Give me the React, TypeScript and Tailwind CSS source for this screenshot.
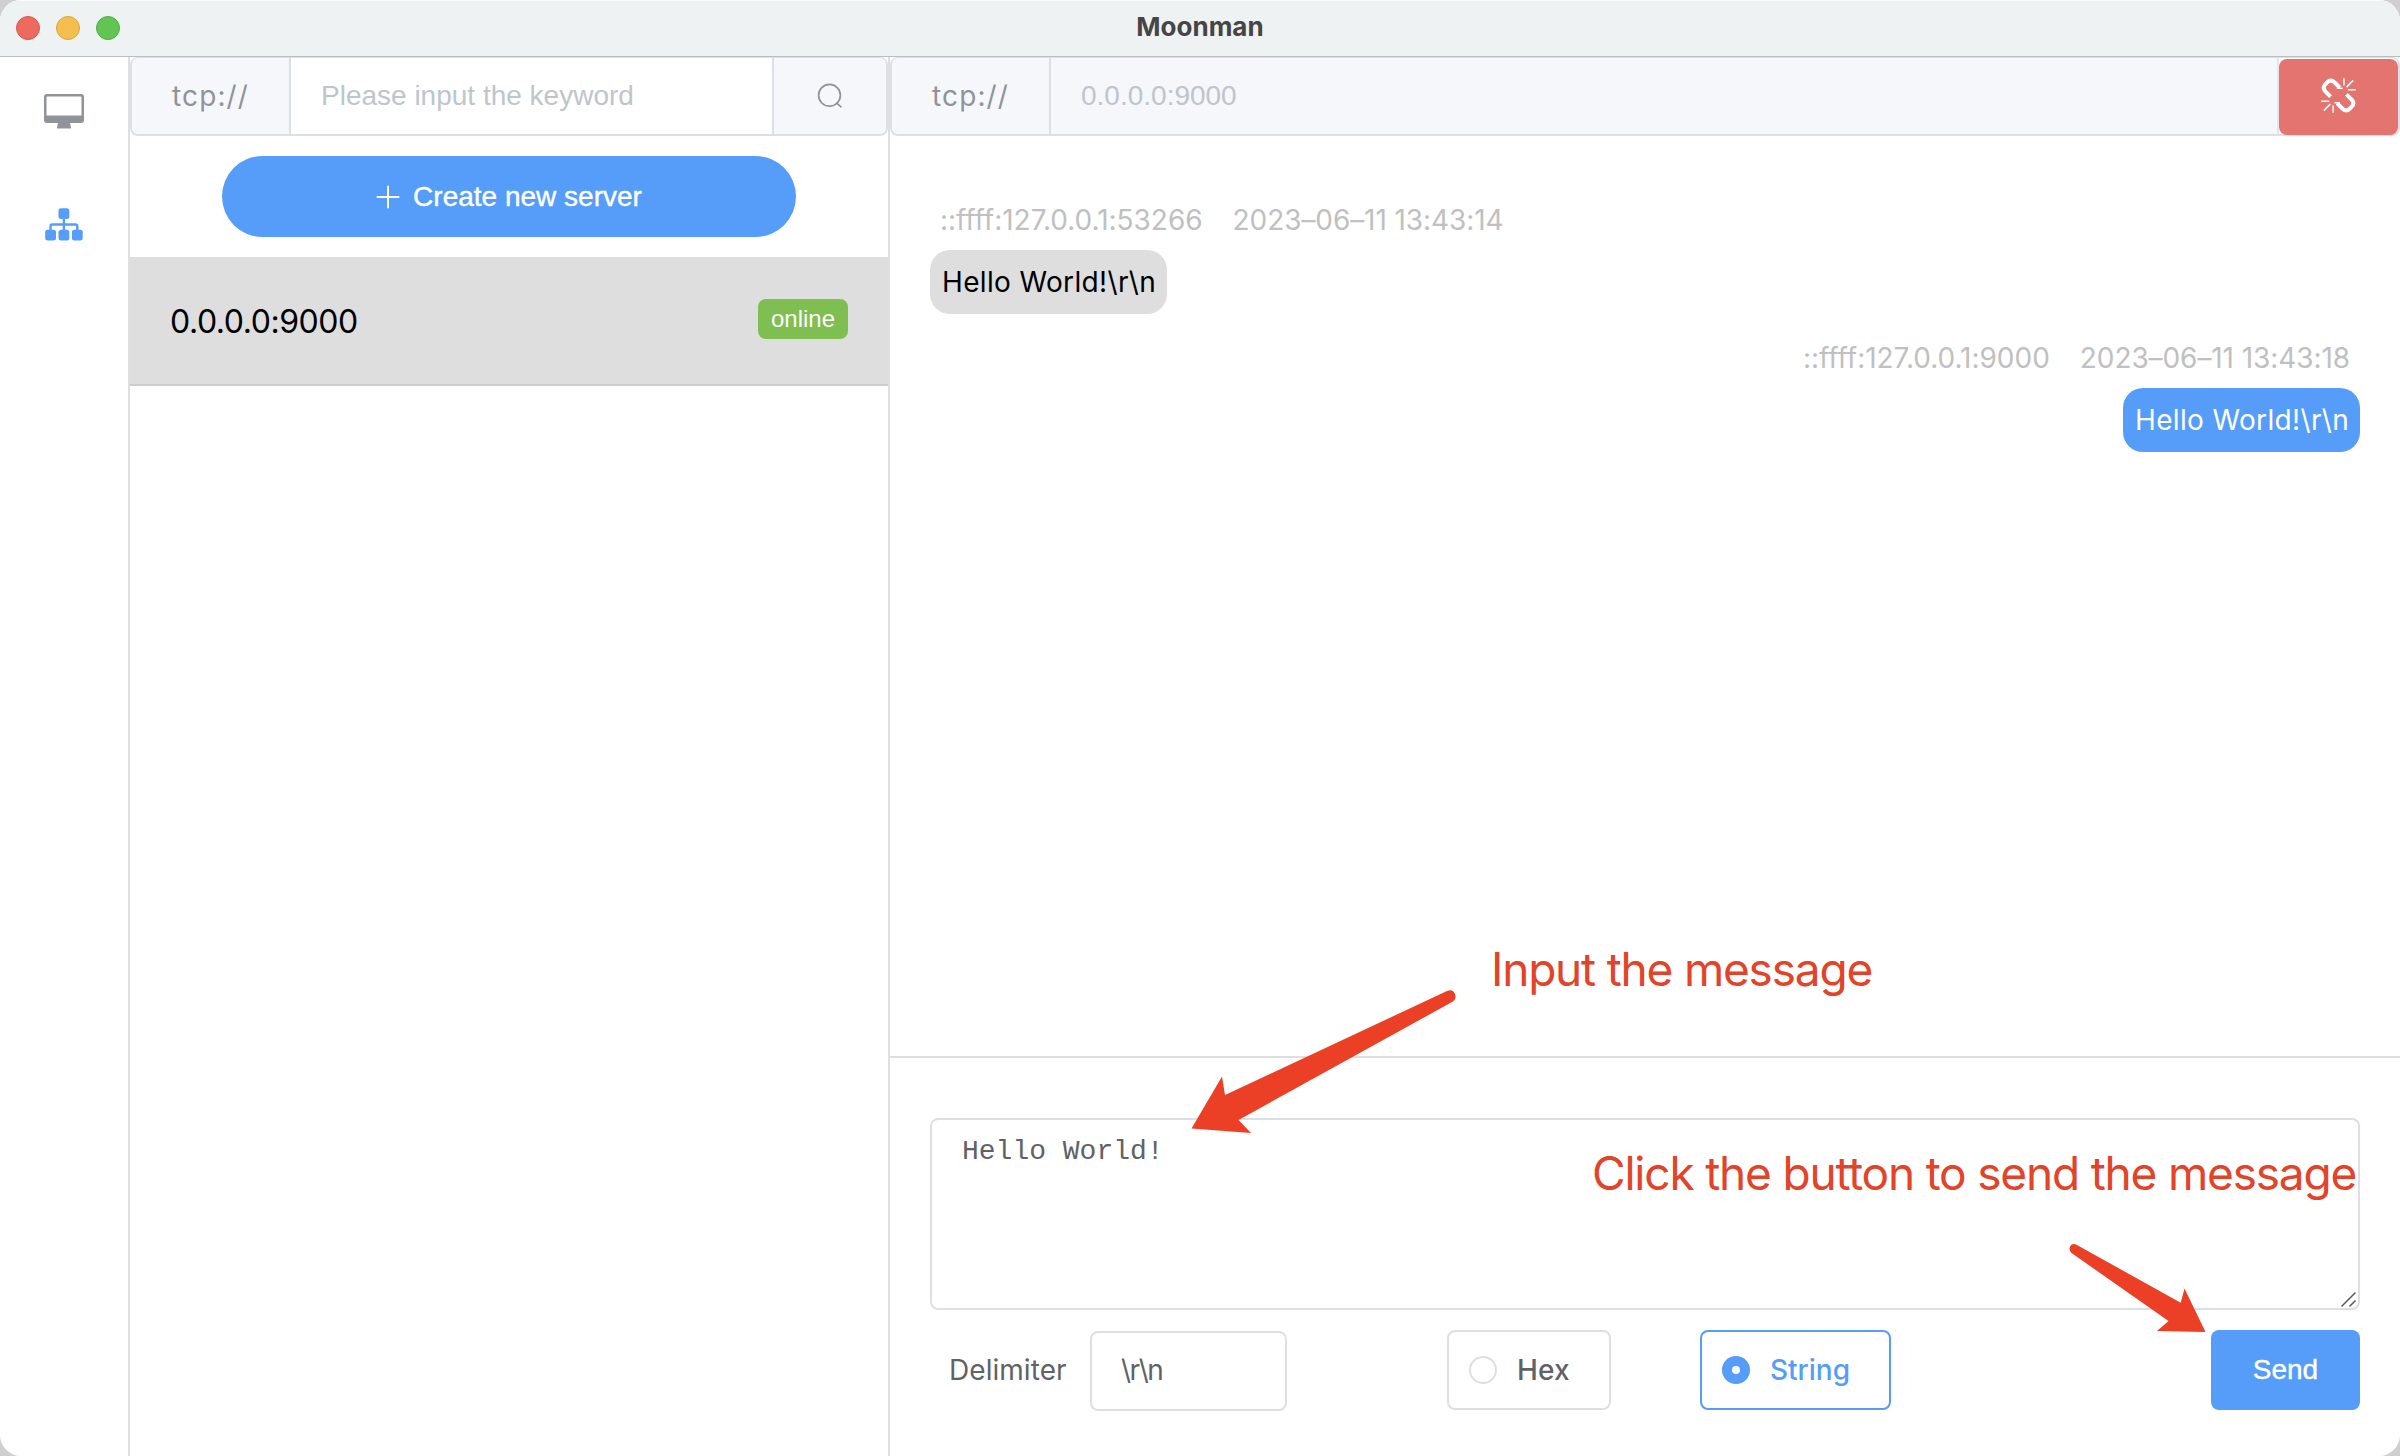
import type { ReactNode } from "react";

function MonitorIcon() {
  return (
    <svg width="40" height="36" viewBox="0 0 40 36" fill="#909399">
      <path
        fillRule="evenodd"
        d="M3 0h34a3 3 0 0 1 3 3v23a3 3 0 0 1-3 3H26l1 4.2q.4 1.3-1 1.3H14q-1.400 0-1-1.300l1-4.200H3a3 3 0 0 1-3-3V3a3 3 0 0 1 3-3zM3.500 2.500a1 1 0 0 0-1 1v18h35v-18a1 1 0 0 0-1-1z"
      />
    </svg>
  );
}

function SitemapIcon() {
  return (
    <svg width="38" height="33" viewBox="0 0 38 33" fill="#559df8">
      <rect x="13.500" y="0.300" width="10.800" height="10.800" rx="2.500" />
      <rect x="0.200" y="21.700" width="10.800" height="10.800" rx="2.500" />
      <rect x="13.500" y="21.700" width="10.800" height="10.800" rx="2.500" />
      <rect x="26.900" y="21.700" width="10.800" height="10.800" rx="2.500" />
      <path
        d="M18.900 10v12M5.500 22.500v-4.200q0-1.800 1.800-1.800h23.200q1.800 0 1.800 1.800v4.200"
        fill="none"
        stroke="#559df8"
        strokeWidth="2.400"
      />
    </svg>
  );
}

function SearchIcon() {
  return (
    <svg width="26" height="26" viewBox="0 0 26 26" fill="none" stroke="#909399" strokeWidth="1.700" strokeLinecap="round">
      <circle cx="12.500" cy="12.300" r="10.900" />
      <path d="M19.700 20.200l4.300 3.600" />
    </svg>
  );
}

function PlusIcon() {
  return (
    <svg width="24" height="24" viewBox="0 0 24 24" stroke="#ffffff" strokeWidth="2" strokeLinecap="round">
      <path d="M12 1.500v21M1.500 12h21" />
    </svg>
  );
}

function UnlinkIcon() {
  return (
    <svg className="-mt-[3px]" width="35" height="35" viewBox="0 0 35 35" fill="none" stroke="#ffffff">
      <g strokeWidth="4">
        <path d="M18.800 9.700L13.400 4.300Q9.700 1 6.300 4.300L4.300 6.300Q1 9.700 4.300 13.400L9.600 18.600" />
        <path d="M16.200 25.300L21.600 30.700Q25.300 34 28.700 30.700L30.700 28.700Q34 25.300 30.700 21.600L25.400 16.400" />
      </g>
      <path
        strokeWidth="1.500"
        strokeLinecap="round"
        d="M22.900 0.800v6.200M31.700 2.900l-5.700 5.700M27.400 11.800h6.900M12.100 34.200v-6.200M3.300 32.100l5.700-5.700M7.600 23.200H0.700M16.500 10.200h4.500M18.500 24.800h-4.500"
      />
    </svg>
  );
}

function Scheme() {
  return (
    <div className="flex w-[159px] shrink-0 items-center justify-center rounded-l-lg border-r-2 border-[#dcdfe6] bg-[#f5f7fa] font-['Inter',sans-serif] text-[28px] tracking-[1.1px] text-[#909399]">
      tcp://
    </div>
  );
}

function Meta({ from, time }: { from: string; time: string }) {
  return (
    <div className="flex gap-[30px] px-[10px] text-[28px] leading-[40px] text-[#c0c0c0]">
      <span className="tracking-[-0.020px]">{from}</span>
      <span className="tracking-[-0.080px]">{time}</span>
    </div>
  );
}

function Bubble({ own, children }: { own?: boolean; children: ReactNode }) {
  return (
    <div
      className={
        "mt-[10px] flex h-16 w-[237px] items-center whitespace-pre rounded-[20px] pl-3 text-[28px] tracking-[0.350px] " +
        (own ? "bg-[#559df8] text-white" : "bg-[#dedede] text-black")
      }
    >
      {children}
    </div>
  );
}

export default function App() {
  return (
    <div className="h-[1456px] w-[2400px] overflow-hidden bg-[#cfcfcf] font-['Inter',sans-serif]">
      <div className="relative flex h-full flex-col overflow-hidden rounded-[21px] bg-white">
        <header className="grid h-[57px] shrink-0 grid-cols-[1fr_auto_1fr] items-start border-b border-[#bcbdc1] bg-[#eef2f3] shadow-[inset_0_1px_0_#f8fafa]">
          <div className="flex gap-4 pl-4 pt-4">
            <span className="size-6 rounded-full border border-[#d5594e] bg-[#ec6a5e]" />
            <span className="size-6 rounded-full border border-[#dba53f] bg-[#f5bf4f]" />
            <span className="size-6 rounded-full border border-[#52ac46] bg-[#61c554]" />
          </div>
          <h1 className="pt-[7px] text-[26px] font-bold leading-[40px] text-[#454545]">Moonman</h1>
          <div />
        </header>

        <div className="flex min-h-0 grow">
          <nav className="flex w-[130px] shrink-0 flex-col items-center border-r-2 border-[#dfdfe1] pt-[37px]">
            <MonitorIcon />
            <div className="mt-[78px]">
              <SitemapIcon />
            </div>
          </nav>

          <aside className="flex w-[760px] shrink-0 flex-col border-r-2 border-[#dfdfe1]">
            <div className="flex h-[79px] rounded-lg border-2 border-t border-[#dcdfe6] bg-white">
              <Scheme />
              <div className="flex grow items-center pl-[30px] font-['Liberation_Sans',sans-serif] text-[28px] text-[#c0c4cc]">
                Please input the keyword
              </div>
              <div className="flex w-[114px] items-center justify-center rounded-r-lg border-l-2 border-[#dcdfe6] bg-[#f5f7fa]">
                <SearchIcon />
              </div>
            </div>

            <button className="ml-[92px] mt-5 flex h-[81px] w-[574px] items-center justify-center gap-[13px] rounded-full bg-[#559df8] font-['Liberation_Sans',sans-serif] text-[28px] text-white [-webkit-text-stroke:0.4px_white]">
              <PlusIcon />
              Create new server
            </button>

            <div className="mt-5 flex h-[129px] items-center justify-between border-b-2 border-[#cdcdcf] bg-[#dedede] pl-10 pr-10">
              <span className="pt-0.5 text-[32px] tracking-[-0.450px] text-black">0.0.0.0:9000</span>
              <span className="mb-[3px] flex h-10 w-[90px] items-center justify-center rounded-lg bg-[#7fbe50] font-['Liberation_Sans',sans-serif] text-[24px] text-white">
                online
              </span>
            </div>
          </aside>

          <main className="flex grow flex-col">
            <div className="flex h-[79px] shrink-0 rounded-lg border-2 border-t border-[#dcdfe6]">
              <Scheme />
              <div className="flex grow items-center border-r-2 border-[#e4e7ed] bg-[#f5f7fa] pl-[30px] font-['Liberation_Sans',sans-serif] text-[28px] text-[#c0c4cc]">
                0.0.0.0:9000
              </div>
              <button className="-mb-px mt-px flex w-[119px] items-center justify-center rounded-lg bg-[#e47470]">
                <UnlinkIcon />
              </button>
            </div>

            <section className="flex grow flex-col px-10 pt-[64px]">
              <div className="flex flex-col items-start">
                <Meta from="::ffff:127.0.0.1:53266" time="2023–06–11 13:43:14" />
                <Bubble>{"Hello World!\\r\\n"}</Bubble>
              </div>
              <div className="mt-6 flex flex-col items-end">
                <Meta from="::ffff:127.0.0.1:9000" time="2023–06–11 13:43:18" />
                <Bubble own>{"Hello World!\\r\\n"}</Bubble>
              </div>
            </section>

            <section className="h-[400px] shrink-0 border-t-2 border-[#dfdfe1] px-10 pt-[60px]">
              <div className="relative h-[192px] rounded-lg border-2 border-[#dcdfe6] pl-[30px] pt-[11px] font-['Liberation_Mono',monospace] text-[28px] leading-[42px] text-[#606266]">
                Hello World!
                <svg className="absolute bottom-0 right-0" width="20" height="20" viewBox="0 0 20 20" stroke="#5a5a5a" strokeWidth="1.500">
                  <path d="M3.500 18.500L17.500 4.500M11.500 18.500l6-6" />
                </svg>
              </div>

              <div className="mt-5 flex h-20 items-center text-[28px] text-[#606266]">
                <label className="w-[160px] pl-[19px] tracking-[0.050px]">Delimiter</label>
                <div className="mt-0.5 flex h-20 w-[197px] items-center whitespace-pre rounded-lg border-2 border-[#dcdfe6] pb-0.5 pl-[29px] tracking-[-1.500px]">
                  {"\\r\\n"}
                </div>
                <div className="ml-[160px] flex h-20 w-[164px] items-center rounded-lg border-2 border-[#dcdfe6] pl-5 font-medium tracking-[0.200px]">
                  <span className="mr-5 size-7 rounded-full border-2 border-[#dcdfe6]" />
                  Hex
                </div>
                <div className="ml-[89px] flex h-20 w-[191px] items-center rounded-lg border-2 border-[#559df8] pl-5 font-medium text-[#559df8]">
                  <span className="mr-5 flex size-7 items-center justify-center rounded-full bg-[#559df8]">
                    <span className="size-2 rounded-full bg-white" />
                  </span>
                  String
                </div>
                <button className="ml-auto h-20 w-[149px] rounded-lg bg-[#559df8] font-['Liberation_Sans',sans-serif] text-white [-webkit-text-stroke:0.4px_white]">
                  Send
                </button>
              </div>
            </section>
          </main>
        </div>

        <p className="absolute left-[1491px] top-[939px] whitespace-nowrap text-[46px] leading-[60px] tracking-[-1.200px] text-[#e24329]">
          Input the message
        </p>
        <p className="absolute left-[1592px] top-[1143px] whitespace-nowrap text-[46px] leading-[60px] tracking-[-1.190px] text-[#e24329]">
          Click the button to send the message
        </p>
        <svg className="absolute left-[1180px] top-[980px]" width="290" height="164" viewBox="1180 980 290 164" fill="#eb4025">
          <path d="M1447 991Q1453 988.500 1455 994Q1457 999 1452 1002L1238.500 1120L1251 1133L1191.500 1128.500L1222 1076.500L1225 1095Z" />
        </svg>
        <svg className="absolute left-[2060px] top-[1236px]" width="150" height="100" viewBox="2060 1236 150 100" fill="#eb4025">
          <path d="M2076 1244.500Q2072 1243 2070 1246.500Q2068.500 1250 2071.500 1253L2168.500 1321L2157 1331L2205.500 1332L2184.500 1288.500L2180.700 1302.700Z" />
        </svg>
      </div>
    </div>
  );
}
